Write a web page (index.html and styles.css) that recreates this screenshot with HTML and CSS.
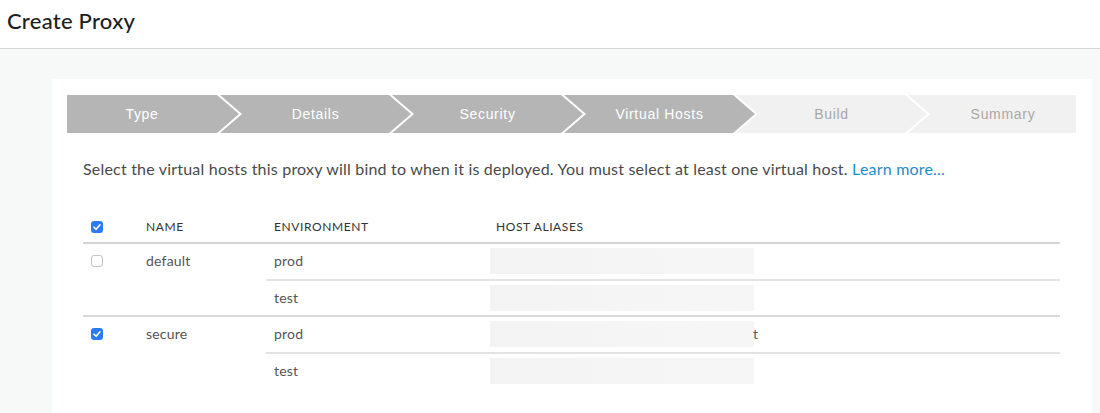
FILE: index.html
```html
<!DOCTYPE html>
<html lang="en">
<head>
<meta charset="utf-8">
<title>Create Proxy</title>
<link rel="stylesheet" href="styles.css">
</head>
<body>
<header class="topbar">
  <h1 class="title">Create Proxy</h1>
</header>
<main class="main">
  <section class="card">
    <nav class="steps">
      <div class="step step-first step-done">Type</div>
      <div class="step step-done">Details</div>
      <div class="step step-done">Security</div>
      <div class="step step-done">Virtual Hosts</div>
      <div class="step step-todo">Build</div>
      <div class="step step-last step-todo">Summary</div>
    </nav>
    <div class="content">
      <p class="desc">Select the virtual hosts this proxy will bind to when it is deployed. You must select at least one virtual host. <a class="link" href="#">Learn more...</a></p>
      <table class="vh-table">
        <thead>
          <tr>
            <th class="col-check"><span class="cb cb-on"><svg viewBox="0 0 12 12" width="12" height="12"><path d="M3 6.2 L5.1 8.3 L9 3.8" fill="none" stroke="#fff" stroke-width="1.6" stroke-linecap="round" stroke-linejoin="round"/></svg></span></th>
            <th class="col-name">NAME</th>
            <th class="col-env">ENVIRONMENT</th>
            <th class="col-host">HOST ALIASES</th>
          </tr>
        </thead>
        <tbody>
          <tr>
            <td class="cell-group group-end" rowspan="2"><div class="cb-wrap"><span class="cb cb-off"></span></div></td>
            <td class="cell-group cell-name group-end" rowspan="2">default</td>
            <td class="cell-env inner-line">prod</td>
            <td class="cell-host inner-line"><div class="host"><span class="blur"></span></div></td>
          </tr>
          <tr>
            <td class="cell-env group-end">test</td>
            <td class="cell-host group-end"><div class="host"><span class="blur"></span></div></td>
          </tr>
          <tr>
            <td class="cell-group" rowspan="2"><div class="cb-wrap"><span class="cb cb-on"><svg viewBox="0 0 12 12" width="12" height="12"><path d="M3 6.2 L5.1 8.3 L9 3.8" fill="none" stroke="#fff" stroke-width="1.6" stroke-linecap="round" stroke-linejoin="round"/></svg></span></div></td>
            <td class="cell-group cell-name" rowspan="2">secure</td>
            <td class="cell-env inner-line">prod</td>
            <td class="cell-host inner-line"><div class="host"><span class="blur"></span><span class="tail">t</span></div></td>
          </tr>
          <tr>
            <td class="cell-env">test</td>
            <td class="cell-host"><div class="host"><span class="blur"></span></div></td>
          </tr>
        </tbody>
      </table>
    </div>
  </section>
</main>
</body>
</html>
```
FILE: styles.css
```css
* { box-sizing: border-box; }
html, body { margin: 0; padding: 0; }
body {
  background: #f7f8f8;
  font-family: Lato, "Open Sans", sans-serif;
  color: #555;
  width: 1100px;
  height: 413px;
  overflow: hidden;
}
.topbar {
  background: #fff;
  height: 49px;
  border-bottom: 1px solid #d5d7d7;
  padding-left: 7px;
}
.title {
  margin: 0;
  font-size: 22px;
  font-weight: 500;
  color: #1e1e1e;
  line-height: 42px;
  letter-spacing: 0.25px;
}
.main {
  padding: 30px 8px 0 52px;
}
.card {
  background: #fff;
  width: 1040px;
  height: 340px;
  padding: 16px 17px 0 15px;
}
.steps {
  display: flex;
  height: 38px;
}
.step {
  height: 38px;
  width: 191px;
  flex: none;
  margin-left: -19px;
  padding: 0 22px;
  display: flex;
  align-items: center;
  justify-content: center;
  font-family: "Liberation Sans", Arial, sans-serif;
  font-size: 14px;
  letter-spacing: 0.7px;
  clip-path: polygon(0 0, calc(100% - 22px) 0, 100% 50%, calc(100% - 22px) 100%, 0 100%, 22px 50%);
}
.step-first {
  width: 172px;
  margin-left: 0;
  padding-left: 0;
  clip-path: polygon(0 0, calc(100% - 22px) 0, 100% 50%, calc(100% - 22px) 100%, 0 100%);
}
.step-last {
  width: 168px;
  padding-right: 0;
  clip-path: polygon(0 0, 100% 0, 100% 100%, 0 100%, 22px 50%);
}
.step-done { background: #b5b5b5; color: #fff; }
.step-todo { background: #f1f1f1; color: #a8a8a8; }
.content {
  padding: 0 32px 0 16px;
}
.desc {
  margin: 26px 0 0;
  font-size: 16px;
  line-height: 20px;
  letter-spacing: 0.2px;
  color: #4a4a4a;
  white-space: nowrap;
}
.link { color: #1f8ccc; text-decoration: none; }
.vh-table {
  margin-top: 33px;
  width: 977px;
  border-collapse: separate;
  border-spacing: 0;
  table-layout: fixed;
}
.vh-table th {
  padding: 0 0 0 8px;
  height: 32px;
  line-height: 30px;
  text-align: left;
  font-weight: 400;
  font-size: 12px;
  letter-spacing: 0.6px;
  color: #333;
  border-bottom: 2px solid #d4d4d4;
  vertical-align: middle;
}
.col-check { width: 55px; }
.col-name { width: 128px; }
.col-env { width: 222px; }
.vh-table td {
  padding: 0 0 0 8px;
  font-size: 14px;
  line-height: 34.5px;
  color: #555;
  letter-spacing: 0.2px;
}
.cell-group { vertical-align: top; }
.cell-env { vertical-align: middle; }
.cell-host { vertical-align: middle; padding-left: 2px !important; }
.inner-line { border-bottom: 2px solid #e3e3e3; }
.group-end { border-bottom: 2px solid #d9d9d9; }
.cb-wrap {
  height: 34px;
  display: flex;
  align-items: center;
}
.cb {
  display: inline-block;
  width: 12px;
  height: 12px;
  border-radius: 3px;
  vertical-align: middle;
}
.vh-table th .cb { margin-top: -2px; }
.cb-on { background: #2b7cf3; }
.cb-on svg { display: block; }
.cb-off { border: 1px solid #c4c4c4; background: #fff; }
.host {
  display: flex;
  align-items: center;
  height: 34px;
}
.blur {
  display: block;
  width: 264px;
  height: 26px;
  background: linear-gradient(90deg, #f3f3f3 0%, #f5f5f5 50%, #f6f6f6 100%);
}
.tail {
  font-size: 14px;
  color: #555;
  margin-left: -1px;
  line-height: 34px;
}
```
